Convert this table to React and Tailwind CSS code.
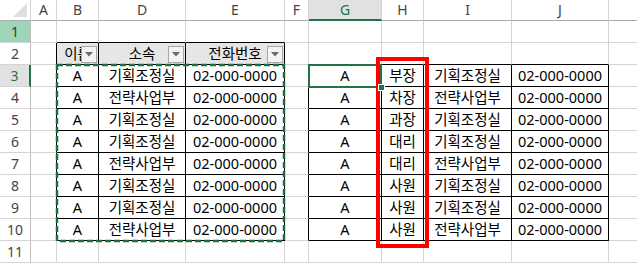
const COLS = ["A", "B", "D", "E", "F", "G", "H", "I", "J", "K"];

const DEPTS = ["기획조정실", "전략사업부", "기획조정실", "기획조정실", "전략사업부", "기획조정실", "기획조정실", "전략사업부"];
const RANKS = ["부장", "차장", "과장", "대리", "대리", "사원", "사원", "사원"];
const PHONE = "02-000-0000";

// table ranges (row numbers 1-based, column index into COLS)
const inTable = (r, c) =>
  (r >= 2 && r <= 10 && c >= 1 && c <= 3) || (r >= 3 && r <= 10 && c >= 5 && c <= 8);

function cellText(r, c) {
  if (r === 2) return ["이름", "소속", "전화번호"][c - 1] ?? "";
  if (r < 3 || r > 10) return "";
  const i = r - 3;
  if (c === 1 || c === 5) return "A";
  if (c === 2 || c === 7) return DEPTS[i];
  if (c === 3 || c === 8) return PHONE;
  if (c === 6) return RANKS[i];
  return "";
}

function Dropdown() {
  return (
    <div className="absolute right-[1px] top-[3px] w-[16px] h-[17px] border border-[#a6a6a6] bg-[#f3f3f3] flex items-center justify-center">
      <svg width="8" height="5" viewBox="0 0 8 5">
        <polygon points="0,0 8,0 4,4.5" fill="#6b6b6b" />
      </svg>
    </div>
  );
}

function Cell({ r, c }) {
  const rb = inTable(r, c) || inTable(r, c + 1);
  const bb = inTable(r, c) || inTable(r + 1, c);
  const header = r === 2 && c >= 1 && c <= 3;
  const text = cellText(r, c);
  return (
    <div
      className={`relative overflow-hidden border-r border-b flex items-center justify-center text-[14.5px] leading-none text-black ${
        rb ? "border-r-black" : "border-r-[#d4d4d4]"
      } ${bb ? "border-b-black" : "border-b-[#d4d4d4]"} ${header ? "bg-[#e7e6e6]" : "bg-white"}`}
    >
      <span className="whitespace-nowrap">{text}</span>
      {header && <Dropdown />}
    </div>
  );
}

function ColHeader({ label }) {
  const sel = label === "G";
  return (
    <div
      className={`flex items-center justify-center text-[14px] leading-none border-r border-r-[#d4d4d4] ${
        sel ? "bg-[#e1e1e1] text-[#217346] border-b-2 border-b-[#217346]" : "bg-white text-[#444] border-b border-b-[#ababab]"
      }`}
    >
      {label === "K" ? "" : label}
    </div>
  );
}

function RowHeader({ n }) {
  let cls = "bg-white text-[#444] border-r border-r-[#bfbfbf]";
  if (n === 1) cls = "bg-[#9fd5b7] text-[#2f3f35] border-r border-r-[#bfbfbf]";
  if (n === 3) cls = "bg-[#e1e1e1] text-[#217346] border-r-2 border-r-[#217346]";
  return (
    <div className={`flex items-center justify-center text-[14px] leading-none border-b border-b-[#d4d4d4] ${cls}`}>
      {n}
    </div>
  );
}

export default function App() {
  const rows = Array.from({ length: 11 }, (_, i) => i + 1);
  return (
    <div className="w-[637px] h-[263px] overflow-hidden bg-white font-['Noto_Sans','Noto_Sans_CJK_KR',sans-serif]">
      <div className="relative w-[673px]">
        <div className="grid grid-cols-[31px_26px_42px_87px_99px_24px_73px_42px_88px_97px_64px] grid-rows-[21px_repeat(11,22px)]">
          {/* corner */}
          <div className="bg-white border-r border-r-[#d4d4d4] border-b border-b-[#ababab] flex items-end justify-end p-[3px]">
            <svg width="14" height="14" viewBox="0 0 14 14">
              <polygon points="14,0 14,14 0,14" fill="#dfdfdf" />
            </svg>
          </div>
          {COLS.map((l) => (
            <ColHeader key={l} label={l} />
          ))}
          {rows.map((r) => [
            <RowHeader key={`h${r}`} n={r} />,
            ...COLS.map((_, c) => <Cell key={`${r}-${c}`} r={r} c={c} />),
          ])}
        </div>

        {/* copy marquee around B3:E10 */}
        <svg className="absolute left-0 top-0 pointer-events-none" width="673" height="263">
          <rect x="57" y="65" width="227" height="176" fill="none" stroke="#1d6b3f" strokeWidth="2.5" strokeDasharray="6 3" />
        </svg>

        {/* active cell G3 */}
        <div className="absolute left-[308px] top-[64px] w-[74px] h-[24px] border-2 border-[#217346] pointer-events-none" />

        {/* red annotation box */}
        <div className="absolute left-[376px] top-[57px] w-[53px] h-[191px] border-4 border-[#ff0000] pointer-events-none" />

        {/* fill handle */}
        <div className="absolute left-[378px] top-[84px] w-[7px] h-[7px] bg-[#217346] border border-white" />
      </div>
    </div>
  );
}
